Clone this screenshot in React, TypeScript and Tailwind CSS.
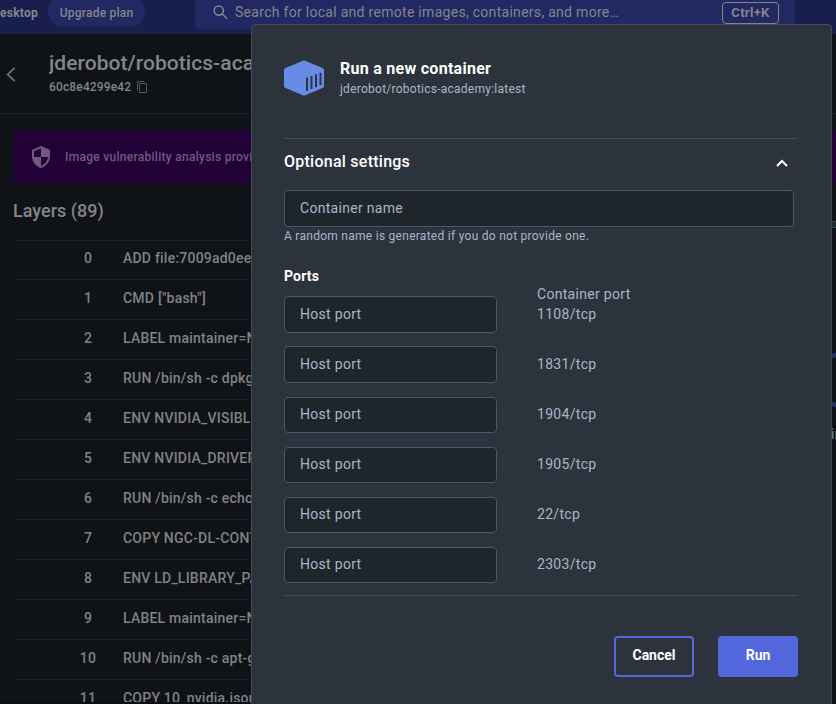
const layers = [
  "ADD file:7009ad0ee",
  'CMD ["bash"]',
  "LABEL maintainer=N",
  "RUN /bin/sh -c dpkg",
  "ENV NVIDIA_VISIBL",
  "ENV NVIDIA_DRIVER",
  "RUN /bin/sh -c echo",
  "COPY NGC-DL-CONT",
  "ENV LD_LIBRARY_PA",
  "LABEL maintainer=N",
  "RUN /bin/sh -c apt-g",
  "COPY 10_nvidia.json",
];

const ports = ["1108/tcp", "1831/tcp", "1904/tcp", "1905/tcp", "22/tcp", "2303/tcp"];

function TopBar() {
  return (
    <header className="flex h-[34px] items-start bg-[#191f4d] text-[#85868c]">
      <div className="h-6 w-12 pt-px text-[12px] leading-[24px] font-bold tracking-[0.25px] whitespace-nowrap">
        esktop
      </div>
      <div className="-mt-1 h-[31px] w-[97px] rounded-full bg-[#222862] pt-1 text-center text-[12px] leading-[27px] font-medium tracking-[0.22px]">
        Upgrade plan
      </div>
      <div className="ml-[50px] flex h-[29px] w-[600px] rounded-b bg-[#222862]">
        <svg className="mt-[5px] ml-[18px] h-[15px] w-[15px]" viewBox="0 0 15 15" fill="none" stroke="currentColor" strokeWidth="1.5">
          <circle cx="5.8" cy="5.6" r="4.6" />
          <path d="M9.2 9l4.800 4.700" />
        </svg>
        <span className="ml-[7px] w-[487px] text-[14px] leading-[25px] tracking-[0.29px] whitespace-nowrap">
          Search for local and remote images, containers, and more…
        </span>
        <span className="mt-[2px] h-[22px] w-[57px] rounded border border-[#85868c] text-center text-[13px] leading-[20px] font-bold tracking-[0.3px]">
          Ctrl+K
        </span>
      </div>
    </header>
  );
}

function ImageHeader() {
  return (
    <div className="flex h-[80px] border-b border-[#1b1f23]">
      <svg className="mt-[33px] ml-[6px] h-[15px] w-[10px] shrink-0 text-[#75787b]" viewBox="0 0 10 15" fill="none" stroke="currentColor" strokeWidth="1.7">
        <path d="M8.700 .8L1.700 7.500l7 6.700" />
      </svg>
      <div className="ml-[33px] w-[203px] overflow-hidden whitespace-nowrap">
        <div className="mt-[16px] text-[21px] leading-[26px] font-medium tracking-[0.05px] text-[#858686]">
          jderobot/robotics-aca
        </div>
        <div className="flex items-center text-[12px] leading-[22px] font-medium text-[#858686]">
          <span className="tracking-[0.15px]">60c8e4299e42</span>
          <svg className="ml-[6px] h-3 w-[10px] text-[#54585b]" viewBox="0 0 10 12" fill="none" stroke="currentColor">
            <path d="M.5 9V.5h7M2.500 2.500h7v9h-7z" />
          </svg>
        </div>
      </div>
    </div>
  );
}

function ShieldIcon() {
  return (
    <svg className="ml-[19px] h-[22px] w-[18px] shrink-0" viewBox="0 0 18 22">
      <path fill="#6f5b80" d="M9 0L0 4v6c0 5.600 3.800 10.700 9 12 5.200-1.300 9-6.400 9-12V4L9 0zM9 11h7c-.5 4.100-3.300 7.800-7 8.900V11H2V5.300L9 2.200V11z" />
    </svg>
  );
}

function ContainerLogo() {
  return (
    <svg className="h-9 w-10 shrink-0" viewBox="0 0 40 36">
      <path fill="#688be8" d="M20 0.300L39 8.200Q40 8.700 40 9.800V26Q40 27.200 39 27.700L20 35.700 1 27.700Q0 27.200 0 26V9.800Q0 8.700 1 8.200Z" />
      <path stroke="#2a3442" strokeWidth="2" d="M23 17.500v13.300M27.500 16v13M32 14.300v13M36.500 12.800v12.500" />
    </svg>
  );
}

function LayersPage() {
  return (
    <main className="h-[704px] w-full overflow-hidden bg-[#0f1216]">
      <TopBar />
      <ImageHeader />
      <div className="mt-[16px] ml-[13px] flex h-[53px] items-center rounded-l bg-[#220138] whitespace-nowrap">
        <ShieldIcon />
        <span className="ml-[15px] w-[187px] overflow-hidden pt-px text-[12px] font-medium tracking-[0.28px] text-[#6f5b80]">
          Image vulnerability analysis provi
        </span>
      </div>
      <h2 className="mt-[15px] ml-[13px] text-[18px] leading-[26px] font-medium text-[#858686]">Layers (89)</h2>
      <div className="mt-[16px] ml-[13px] w-[239px]">
        {layers.map((command, index) => (
          <div
            key={index}
            className="flex h-10 border-t border-[#1b1f23] text-[14px] leading-[36px] font-medium text-[#818283] whitespace-nowrap first:h-[39px] first:leading-[34px]"
          >
            <span className="ml-[40px] w-[70px] shrink-0 pr-0 text-center tracking-[0.2px]">
              <span className="block w-[70px]">{index}</span>
            </span>
            <span className="w-[129px] overflow-hidden tracking-[0.22px]">{command}</span>
          </div>
        ))}
      </div>
    </main>
  );
}

function HostPort({ port, compact }: { port: string; compact: boolean }) {
  return (
    <div className="flex h-[50px] items-start text-[14px] tracking-[0.3px]">
      <div
        className={
          compact
            ? "mt-px h-[36px] w-[213px] rounded border border-[#49566b] bg-[#1e252b] px-[15px] leading-[32px]"
            : "h-[37px] w-[213px] rounded border border-[#49566b] bg-[#1e252b] px-[15px] leading-[34px]"
        }
      >
        Host port
      </div>
      <span className="ml-10 leading-[36px]">{port}</span>
    </div>
  );
}

function RunDialog() {
  return (
    <section className="absolute top-6 left-[251px] flex h-[690px] w-[581px] flex-col rounded border border-[#414c57] bg-[#2c333c] pr-[33px] pl-8 text-[#a9b6c9]">
      <div className="mt-[35px] flex h-[79px] border-b border-[#454c56]">
        <ContainerLogo />
        <div className="ml-4">
          <h1 className="-mt-[3px] text-[16px] leading-[24px] font-bold tracking-[0.27px] text-white">Run a new container</h1>
          <p className="text-[12px] leading-[16px] tracking-[0.25px]">jderobot/robotics-academy:latest</p>
        </div>
      </div>
      <div className="flex h-[52px] items-start justify-between pt-[11px] pr-[10px]">
        <h2 className="text-[16px] leading-[24px] font-medium tracking-[0.25px] text-white">Optional settings</h2>
        <svg className="mt-[9px] h-[8px] w-3" viewBox="0 0 12 8" fill="none" stroke="white" strokeWidth="2">
          <path d="M1 7l5-5 5 5" />
        </svg>
      </div>
      <div className="-mt-px h-[37px] w-[510px] rounded border border-[#49566b] bg-[#1e252b] px-[15px] text-[14px] leading-[34px] tracking-[0.3px]">
        Container name
      </div>
      <p className="-mt-px text-[12px] leading-[20px] tracking-[0.27px]">A random name is generated if you do not provide one.</p>
      <div className="mt-[20px] flex h-[30px] text-[14px]">
        <h3 className="w-[253px] leading-[20px] font-bold tracking-[0.15px] text-white">Ports</h3>
        <span className="pt-[18px] leading-[20px] tracking-[0.3px]">Container port</span>
      </div>
      <div className="h-[300px] border-b border-[#454c56]">
        {ports.map((port, index) => (
          <HostPort key={port} port={port} compact={index > 1} />
        ))}
      </div>
      <div className="mt-10 flex justify-end gap-6 text-[14px] font-bold text-white">
        <button className="flex h-[41px] w-20 justify-center rounded border-2 border-[#5367dd] leading-[34px]">Cancel</button>
        <button className="flex h-[41px] w-20 justify-center rounded bg-[#5367dd] leading-[38px]">Run</button>
      </div>
    </section>
  );
}

export default function App() {
  return (
    <div className="relative h-[704px] w-[836px] overflow-hidden font-['Roboto','Liberation_Sans',sans-serif]">
      <LayersPage />
      <div className="absolute top-[221px] left-[832px] h-[7px] w-1 border-y border-[#354451] bg-[#202a32]" />
      <div className="absolute top-[353px] left-[832px] h-[5px] w-1 -skew-y-12 bg-[#252f5e]" />
      <div className="absolute top-[402px] left-[832px] h-[5px] w-1 skew-y-12 bg-[#252f5e]" />
      <div className="absolute top-[424px] left-[831px] w-[5px] overflow-hidden text-[14px] leading-[20px] text-[#858686]">in</div>
      <div className="absolute bottom-0 left-0 h-[2px] w-[251px] bg-[#0d0e17]" />
      <RunDialog />
    </div>
  );
}
